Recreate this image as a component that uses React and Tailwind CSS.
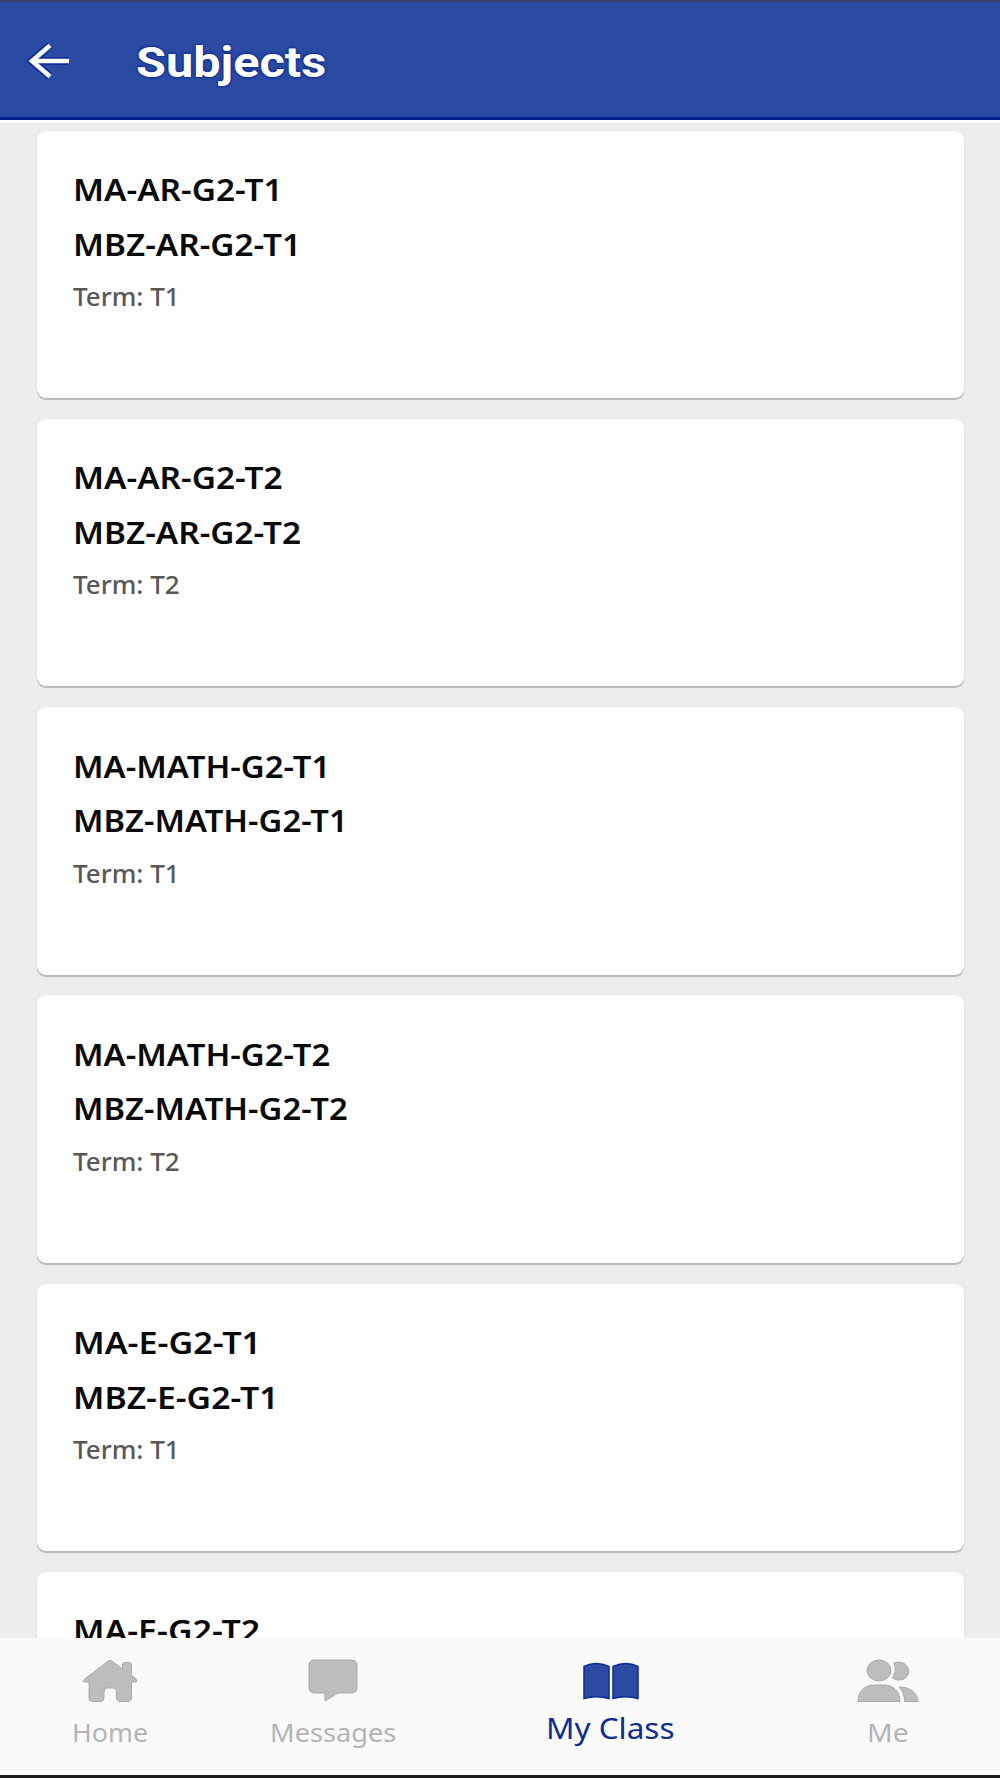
import { useLayoutEffect, useRef } from "react";

const subjects = [
  { a: "MA-AR-G2-T1", aw: 207, b: "MBZ-AR-G2-T1", bw: 225, term: "Term: T1", tw: 105 },
  { a: "MA-AR-G2-T2", aw: 207, b: "MBZ-AR-G2-T2", bw: 225, term: "Term: T2", tw: 105 },
  { a: "MA-MATH-G2-T1", aw: 254, b: "MBZ-MATH-G2-T1", bw: 272, term: "Term: T1", tw: 105 },
  { a: "MA-MATH-G2-T2", aw: 254, b: "MBZ-MATH-G2-T2", bw: 272, term: "Term: T2", tw: 105 },
  { a: "MA-E-G2-T1", aw: 185, b: "MBZ-E-G2-T1", bw: 203, term: "Term: T1", tw: 105 },
  { a: "MA-E-G2-T2", aw: 184 },
];

// Stretches one line of text horizontally to the given width.
function Line({ width, className, children }) {
  const ref = useRef(null);
  useLayoutEffect(() => {
    const el = ref.current;
    const fit = () => {
      el.style.transform = `scaleX(${width / el.offsetWidth})`;
    };
    fit();
    document.fonts?.ready.then(fit);
  }, [width]);
  return (
    <div className={className} style={{ width }}>
      <span ref={ref} className="inline-block origin-left whitespace-nowrap">{children}</span>
    </div>
  );
}

function Card({ s }) {
  return (
    <div className="h-[267.5px] shrink-0 rounded-[9px] bg-white pl-[36.5px] pt-[31.5px] shadow-[0_2px_1px_#b8b8b8,0_0_2px_#dedede]">
      <Line width={s.aw + 3} className="h-[54.5px] text-[31px] font-semibold leading-[54.5px] text-[#0a0a0a]">{s.a}</Line>
      {s.b && (
        <>
          <Line width={s.bw + 3} className="h-[54.5px] text-[31px] font-semibold leading-[54.5px] text-[#0a0a0a]">{s.b}</Line>
          <Line width={s.tw + 2} className="h-[50px] text-[26px] font-medium leading-[50px] text-[#585858]">{s.term}</Line>
        </>
      )}
    </div>
  );
}

function HomeIcon() {
  return (
    <svg width="56" height="44" viewBox="0 0 56 44" fill="#bdbdbd" stroke="#aaaaaa" strokeWidth="1">
      <path d="M26 2.2Q28 .5 30 2.2L40.500 10V6Q40.500 3.500 43 3.500H47Q49.500 3.500 49.500 6V16L54.500 20.500Q56 23 53 23H49.500V39Q49.500 42.500 46 42.500H38Q34.500 42.500 34.500 39V33Q34.500 29 31 29H25.500Q22 29 22 33V39Q22 42.500 18.500 42.500H10.500Q7 42.500 7 39V23H3Q-.5 23 2 20.500Z" />
    </svg>
  );
}

function MessageIcon() {
  return (
    <svg width="50" height="44" viewBox="0 0 50 44" fill="#bdbdbd" stroke="#aaaaaa" strokeWidth="1">
      <path d="M6 1H44Q49 1.500 49 6V29Q49 33.500 44 34H30L17 42V34H6Q1 33.500 1 29V6Q1 1.500 6 1Z" />
    </svg>
  );
}

function BookIcon() {
  return (
    <svg width="56" height="38" viewBox="0 0 56 38" fill="#2b4ba3" stroke="#0a2c98" strokeWidth="1.5">
      <path d="M1 4.500Q13 -1.500 26 4.500V36.500Q13 33 1 36.500Z" />
      <path d="M30 4.500Q43 -1.500 55 4.500V36.500Q43 33 30 36.500Z" />
    </svg>
  );
}

function PeopleIcon() {
  return (
    <svg width="62" height="44" viewBox="0 0 62 44" fill="#bdbdbd" stroke="#aaaaaa" strokeWidth="1">
      <ellipse cx="22" cy="11.500" rx="12" ry="10.500" />
      <path d="M37 4Q44 1.500 49 6Q55 12.500 49 18.500Q43 23.500 35.500 19Q40 11.500 37 4Z" />
      <path d="M1 42.500C1 32 8 26 17 26H27C36 26 43 32 43 42.500Z" />
      <path d="M42 28C53 28 61 34 61 42.500H47.500Q47.500 33 42 28Z" />
    </svg>
  );
}

export default function App() {
  return (
    <div className="flex h-[1778px] w-[1000px] flex-col overflow-hidden bg-[#ededed] font-['Noto_Sans',sans-serif]">
      <header className="flex h-[123px] shrink-0 items-start border-b-[3px] border-white bg-[#2b4ba3]">
        <div className="flex h-[120px] w-full items-start border-b-[3px] border-t-2 border-b-[#00208f] border-t-[#3a4672] pl-[27px] pt-[40px]">
          <svg width="43" height="38" viewBox="0 0 43 38" fill="none">
            <path d="M23 3.500L5 19L23 34.500M5 19H42" stroke="#0f3096" strokeWidth="8" />
            <path d="M23 3.500L5 19L23 34.500M5 19H42" stroke="white" strokeWidth="4.500" />
          </svg>
          <Line width={190} className="ml-[66px] mt-[-3px] h-[48px] font-['Roboto',sans-serif] text-[42px] font-bold leading-[48px] text-white [text-shadow:0_0_3px_#001f8c,0_0_2px_#001f8c]">Subjects</Line>
        </div>
      </header>
      <main className="flex min-h-0 flex-1 flex-col gap-[20.75px] overflow-hidden px-[36.5px] pt-[7.5px]">
        {subjects.map((s) => <Card key={s.a} s={s} />)}
      </main>
      <nav className="flex h-[140px] shrink-0 border-b-[3px] border-[#1c1c1c] bg-[#fafafa] pl-[72px] pt-[21px] text-[25px] leading-[34px] text-[#b4b4b4] shadow-[inset_0_-4px_0_white]">
        <div className="flex w-[76px] flex-col items-center">
          <HomeIcon />
          <Line width={76} className="mt-[12px]">Home</Line>
        </div>
        <div className="ml-[122px] flex w-[126px] flex-col items-center">
          <MessageIcon />
          <Line width={126} className="mt-[12px]">Messages</Line>
        </div>
        <div className="ml-[150px] flex w-[129px] flex-col items-center pt-[3px]">
          <BookIcon />
          <Line width={129} className="mt-[8px] text-[29px] leading-[40px] text-[#0d2c97]">My Class</Line>
        </div>
        <div className="ml-[182px] flex w-[62px] flex-col items-center">
          <PeopleIcon />
          <Line width={42} className="mt-[12px]">Me</Line>
        </div>
      </nav>
    </div>
  );
}
